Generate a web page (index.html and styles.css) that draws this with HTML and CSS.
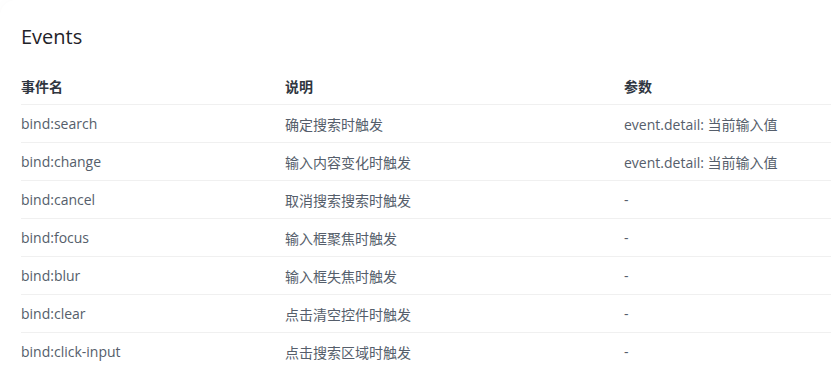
FILE: index.html
```html
<!DOCTYPE html>
<html lang="zh">
<head>
<meta charset="utf-8">
<title>Events</title>
<link rel="stylesheet" href="styles.css">
</head>
<body>
<section class="card">
  <h2 class="title">Events</h2>
  <table class="events">
    <colgroup>
      <col class="c1"><col class="c2"><col class="c3">
    </colgroup>
    <thead>
      <tr><th>事件名</th><th>说明</th><th>参数</th></tr>
    </thead>
    <tbody>
      <tr><td>bind:search</td><td>确定搜索时触发</td><td>event.detail: 当前输入值</td></tr>
      <tr><td>bind:change</td><td>输入内容变化时触发</td><td>event.detail: 当前输入值</td></tr>
      <tr><td>bind:cancel</td><td>取消搜索搜索时触发</td><td>-</td></tr>
      <tr><td>bind:focus</td><td>输入框聚焦时触发</td><td>-</td></tr>
      <tr><td>bind:blur</td><td>输入框失焦时触发</td><td>-</td></tr>
      <tr><td>bind:clear</td><td>点击清空控件时触发</td><td>-</td></tr>
      <tr><td>bind:click-input</td><td>点击搜索区域时触发</td><td>-</td></tr>
    </tbody>
  </table>
</section>
</body>
</html>
```

FILE: styles.css
```css
html, body {
  margin: 0;
  padding: 0;
  background: #ffffff;
  overflow: hidden;
}
body {
  font-family: "Open Sans", "Noto Sans CJK SC", sans-serif;
  color: #555e6b;
}
.card {
  padding: 23px 0 0 21px;
  border-radius: 16px 0 0 0;
  box-shadow: 0 0 12px rgba(0, 0, 0, 0.025);
  background: #fff;
  height: 373px;
  box-sizing: border-box;
}
.title {
  margin: 0 0 17px 0;
  font-size: 20px;
  line-height: 28px;
  font-weight: 500;
  color: #1f2329;
}
.events {
  border-collapse: collapse;
  table-layout: fixed;
  width: 810px;
  font-size: 14px;
}
.c1 { width: 264px; }
.c2 { width: 339px; }
.c3 { width: 207px; }
.events th {
  text-align: left;
  font-weight: 700;
  color: #2f3640;
  height: 36px;
  padding: 0;
  border-bottom: 1px solid #f0f0f0;
  font-size: 14px;
}
.events td {
  height: 37px;
  padding: 0;
  border-bottom: 1px solid #f0f0f0;
  white-space: nowrap;
}
.events tbody tr:last-child td {
  border-bottom: none;
}
```
